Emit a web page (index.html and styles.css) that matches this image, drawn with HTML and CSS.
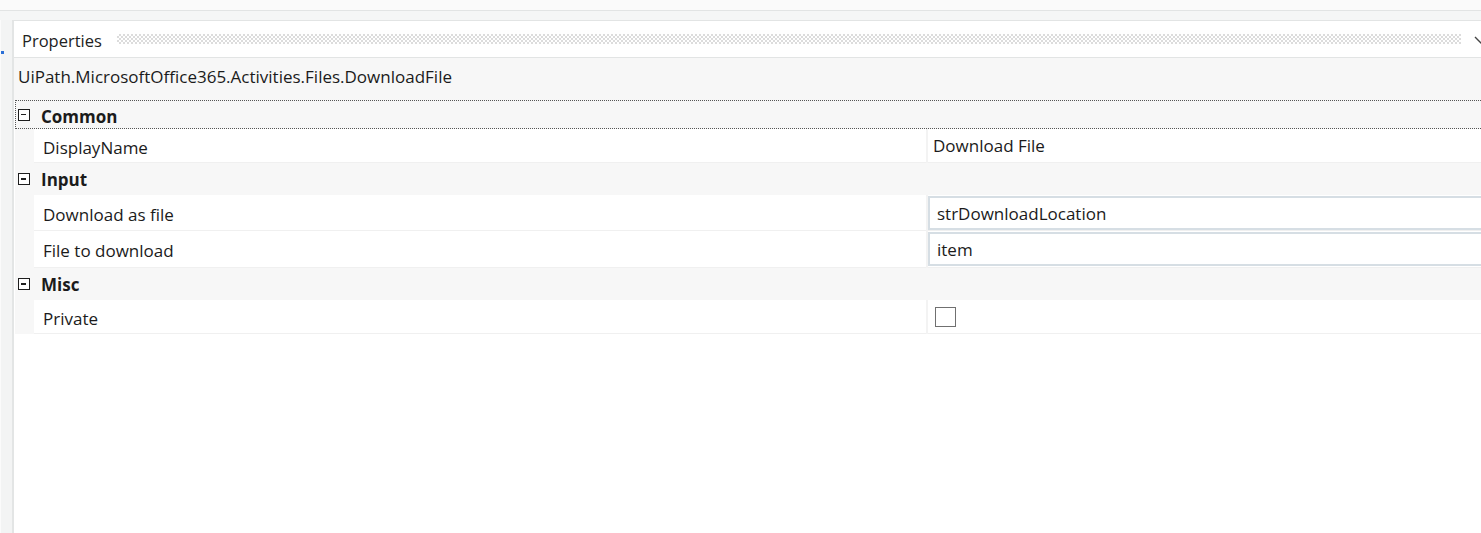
FILE: index.html
```html
<!DOCTYPE html>
<html lang="en">
  <head>
    <meta charset="UTF-8" />
    <meta name="viewport" content="width=device-width, initial-scale=1.0" />
    <title>Properties</title>
    <link rel="stylesheet" href="styles.css">
  </head>
  <body>
    <div class="topbar"></div>
    <div class="workspace">
      <div class="leftstrip">
        <span class="bluemark"></span>
      </div>
      <div class="panel">
        <div class="panelHeader">
          <span class="panelTitle">Properties</span>
          <span class="grip"></span>
          <svg class="chevron" width="14" height="10" viewBox="0 0 14 10">
            <path d="M1 1 L7 7 L13 1" fill="none" stroke="#444" stroke-width="1.4" />
          </svg>
        </div>

        <div class="typeName">UiPath.MicrosoftOffice365.Activities.Files.DownloadFile</div>

        <div class="grid">
          <div class="category focused">
            <span class="toggle"></span>
            <span class="catTitle">Common</span>
          </div>
          <div class="prop">
            <div class="gutter"></div>
            <div class="name">DisplayName</div>
            <div class="divider"></div>
            <div class="value plain">Download File</div>
          </div>

          <div class="category">
            <span class="toggle"></span>
            <span class="catTitle">Input</span>
          </div>
          <div class="prop tall">
            <div class="gutter"></div>
            <div class="name">Download as file</div>
            <div class="divider"></div>
            <div class="value"><div class="textbox">strDownloadLocation</div></div>
          </div>
          <div class="prop tall last">
            <div class="gutter"></div>
            <div class="name">File to download</div>
            <div class="divider"></div>
            <div class="value"><div class="textbox">item</div></div>
          </div>

          <div class="category">
            <span class="toggle"></span>
            <span class="catTitle">Misc</span>
          </div>
          <div class="prop">
            <div class="gutter"></div>
            <div class="name">Private</div>
            <div class="divider"></div>
            <div class="value"><span class="checkbox"></span></div>
          </div>
        </div>
      </div>
    </div>
  </body>
</html>
```

FILE: styles.css
```css
* {
  margin: 0;
  padding: 0;
  box-sizing: border-box;
  font-family: "Open Sans", "Noto Sans", sans-serif;
}

body {
  width: 1481px;
  height: 533px;
  overflow: hidden;
  background-color: #fafafa;
  color: #1b1b1b;
  font-size: 17px;
}

.topbar {
  height: 11px;
  border-bottom: 1px solid #e2e4e4;
  background-color: #fafafa;
}

.workspace {
  display: flex;
  height: 522px;
  background-color: #f5f6f6;
}

.leftstrip {
  width: 12px;
  margin-top: 9px;
  background-color: #f3f4f4;
  border-left: 1px solid #fbfbfb;
  position: relative;
}

.bluemark {
  position: absolute;
  left: 0;
  top: 31px;
  width: 3px;
  height: 3px;
  background-color: #2a6fd6;
}

.panel {
  flex: 1;
  margin-top: 9px;
  background-color: #ffffff;
  border-left: 2px solid #e3e5e5;
  border-top: 1px solid #e2e4e4;
  display: flex;
  flex-direction: column;
  overflow: hidden;
}

.panelHeader {
  display: flex;
  align-items: center;
  height: 37px;
  padding-left: 8px;
  padding-top: 3px;
  border-bottom: 1px solid #e2e4e4;
  background-color: #ffffff;
  position: relative;
}

.panelTitle {
  font-size: 16.5px;
  color: #222;
  white-space: nowrap;
}

.grip {
  width: 1344px;
  height: 10px;
  margin-left: 15px;
  margin-top: -3px;
  background: repeating-conic-gradient(#dcdcdc 0 25%, #ffffff 0 50%) 0 0 / 4px 4px;
}

.chevron {
  position: absolute;
  left: 1460px;
  top: 15px;
}

.typeName {
  height: 42px;
  display: flex;
  align-items: center;
  padding-left: 4px;
  padding-bottom: 5px;
  background-color: #f7f7f7;
  white-space: nowrap;
}

.grid {
  flex: 1;
  padding-left: 1px;
  background-color: #ffffff;
}

.category {
  display: flex;
  align-items: center;
  height: 32px;
  background-color: #f7f7f7;
  padding-left: 2px;
  gap: 11px;
}

.category.focused {
  height: 29px;
  border-top: 1px dotted #555;
  border-bottom: 1px dotted #555;
  border-left: 1px dotted #555;
  padding-left: 1px;
}

.category.focused .catTitle {
  padding-top: 3px;
}

.toggle {
  width: 12px;
  height: 12px;
  margin-left: 1px;
  border: 1.5px solid #1e1e1e;
  background-color: #fff;
  position: relative;
}

.toggle::after {
  content: "";
  position: absolute;
  left: 2px;
  top: 4px;
  width: 5px;
  height: 1.5px;
  background-color: #1e1e1e;
}

.catTitle {
  font-weight: 700;
  padding-top: 1px;
}

.prop {
  display: flex;
  height: 34px;
  background-color: #f7f7f7;
}

.prop.tall {
  height: 36px;
}

.prop.tall.last {
  height: 37px;
}

.gutter {
  width: 19px;
  flex-shrink: 0;
}

.name {
  width: 892px;
  flex-shrink: 0;
  background-color: #ffffff;
  border-bottom: 1px solid #f0f0f0;
  display: flex;
  align-items: center;
  padding-left: 9px;
  padding-top: 3px;
  white-space: nowrap;
}

.divider {
  width: 2px;
  flex-shrink: 0;
  background-color: #f3f3f3;
}

.value {
  flex: 1;
  min-width: 0;
  background-color: #ffffff;
  border-bottom: 1px solid #f0f0f0;
  display: flex;
  align-items: center;
  white-space: nowrap;
  overflow: hidden;
}

.value.plain {
  padding-left: 5px;
  align-items: flex-start;
  padding-top: 5px;
}

.textbox {
  width: 100%;
  height: 34px;
  margin-top: 1px;
  align-self: flex-start;
  border: 2px solid #d6dee4;
  border-right: 0;
  display: flex;
  align-items: center;
  padding-left: 7px;
  padding-top: 1px;
  background-color: #ffffff;
}

.checkbox {
  width: 21px;
  height: 20px;
  margin-left: 7px;
  border: 1px solid #707070;
  background-color: #fff;
}
```
